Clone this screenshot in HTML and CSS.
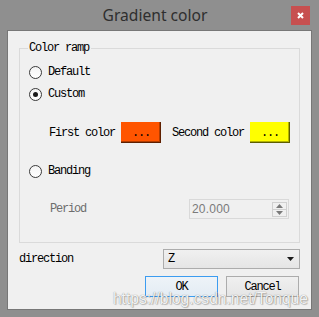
FILE: index.html
```html
<!DOCTYPE html>
<html>
<head>
<meta charset="utf-8">
<link rel="stylesheet" href="styles.css">
</head>
<body>
<div class="window">
  <div class="titlebar">
    <span class="spacer"></span>
    <div class="title">Gradient color</div>
    <div class="close">
      <svg width="19" height="19" viewBox="0 0 19 19"><path d="M7 7 L12 12 M12 7 L7 12" stroke="#fff" stroke-width="2" fill="none"/></svg>
    </div>
  </div>
  <div class="content">
    <div class="group">
      <span class="legend">Color ramp</span>
      <div class="row radio-row first"><span class="radio"></span><span class="lbl">Default</span></div>
      <div class="row radio-row gap6"><span class="radio checked"></span><span class="lbl">Custom</span></div>
      <div class="row colors">
        <span class="clabel w66">First color</span>
        <span class="swatch orange">...</span>
        <span class="clabel w72">Second color</span>
        <span class="swatch yellow">...</span>
      </div>
      <div class="row radio-row gap20"><span class="radio"></span><span class="lbl">Banding</span></div>
      <div class="row period">
        <span class="plabel">Period</span>
        <div class="spin">
          <span class="spinval">20.000</span>
          <div class="spinbtns">
            <div class="sb up"><svg width="7" height="4" viewBox="0 0 7 4"><polygon points="3.5,0 7,4 0,4" fill="#7a7a7a"/></svg></div>
            <div class="sb down"><svg width="7" height="4" viewBox="0 0 7 4"><polygon points="0,0 7,0 3.5,4" fill="#7a7a7a"/></svg></div>
          </div>
        </div>
      </div>
    </div>
    <div class="dir-row">
      <span class="lbl">direction</span>
      <div class="combo">
        <span class="lbl">Z</span>
        <svg class="arrow" width="7" height="4" viewBox="0 0 7 4"><polygon points="0,0 7,0 3.5,4" fill="#1a1a1a"/></svg>
      </div>
    </div>
    <div class="btn-row">
      <div class="btn ok">OK</div>
      <div class="btn">Cancel</div>
    </div>
    <div class="watermark">https://blog.csdn.net/Tonque</div>
  </div>
</div>
</body>
</html>
```

FILE: styles.css
```css
* { box-sizing: border-box; }
html, body { margin: 0; padding: 0; }
body { width: 319px; height: 317px; overflow: hidden; background: #8f8f8f; }

.window {
  width: 319px;
  height: 317px;
  background: #8f8f8f;
  display: flex;
  flex-direction: column;
}

.titlebar {
  height: 30px;
  display: grid;
  grid-template-columns: 1fr auto 1fr;
  padding-right: 9px;
}
.title {
  font-family: "Noto Sans", sans-serif;
  font-size: 15.6px;
  line-height: 30px;
  color: #2e2e2e;
  white-space: nowrap;
}
.close {
  justify-self: end;
  margin-top: 6px;
  width: 19px;
  height: 19px;
  background: #c75050;
}
.close svg { display: block; }

.content {
  position: relative;
  margin: 0 7px;
  height: 280px;
  border: 1px solid #777;
  background: #f0f0f0;
  padding: 17px 11px 0 11px;
  font-family: "Liberation Mono", monospace;
  font-size: 12px;
  letter-spacing: -1.2px;
  color: #000;
}

.group {
  position: relative;
  border: 1px solid #dadada;
  padding: 15px 0 23px 9px;
  display: flex;
  flex-direction: column;
}
.legend {
  position: absolute;
  top: -9px;
  left: 8px;
  padding: 0 2px 0 1px;
  line-height: 16px;
  background: #f0f0f0;
}

.row { display: flex; align-items: center; }
.radio-row { height: 16px; }
.gap6 { margin-top: 6px; }
.gap20 { margin-top: 20px; }

.radio {
  width: 13px;
  height: 13px;
  border-radius: 50%;
  border: 1px solid #3a3a3a;
  background: linear-gradient(#f4f4f4, #ffffff);
  display: flex;
  align-items: center;
  justify-content: center;
  margin-right: 6px;
}
.radio.checked::after {
  content: "";
  width: 5px;
  height: 5px;
  border-radius: 50%;
  background: #1a1a1a;
}
.lbl { line-height: 16px; }

.colors { margin-top: 20px; height: 21px; padding-left: 20px; }
.clabel { display: inline-block; line-height: 16px; white-space: nowrap; }
.w66 { width: 66px; margin-right: 6px; }
.w72 { width: 72px; margin-left: 11px; margin-right: 6px; }
.swatch {
  width: 40px;
  height: 21px;
  display: flex;
  align-items: center;
  justify-content: center;
  line-height: 16px;
}
.orange {
  background: #ff5500;
  box-shadow: inset -1px -1px 0 #5e1f00, inset -2px -2px 0 #b33c00;
}
.yellow {
  background: #ffff00;
  box-shadow: inset -1px -1px 0 #5e5e00, inset -2px -2px 0 #b3b300;
}

.period { margin-top: 20px; height: 20px; padding-left: 21px; padding-right: 10px; }
.plabel { color: #6d6d6d; line-height: 16px; }
.spin {
  margin-left: auto;
  width: 100px;
  height: 20px;
  border: 1px solid #d9d9d9;
  display: flex;
  align-items: center;
  padding-left: 2px;
}
.spinval {
  font-family: "Liberation Sans", sans-serif;
  font-size: 12px;
  letter-spacing: 0.2px;
  color: #7a7a7a;
}
.spinbtns {
  margin-left: auto;
  margin-right: 1px;
  width: 15px;
  height: 15px;
  border: 1px solid #d0d0d0;
  display: flex;
  flex-direction: column;
}
.sb { flex: 1; display: flex; align-items: center; justify-content: center; }
.sb.up { border-bottom: 1px solid #d0d0d0; }
.sb svg { display: block; }

.dir-row { margin-top: 6px; height: 20px; display: flex; align-items: center; }
.combo {
  margin-left: auto;
  width: 137px;
  height: 20px;
  border: 1px solid #acacac;
  background: linear-gradient(#f0f0f0, #e5e5e5);
  display: flex;
  align-items: center;
  padding-left: 4px;
  padding-right: 5px;
}
.combo .arrow { margin-left: auto; display: block; }

.btn-row { margin-top: 7px; height: 21px; display: flex; justify-content: flex-end; gap: 8px; padding-right: 1px; }
.btn {
  width: 73px;
  height: 21px;
  border: 1px solid #acacac;
  background: linear-gradient(#f0f0f0, #e5e5e5);
  display: flex;
  align-items: center;
  justify-content: center;
  line-height: 16px;
}
.btn.ok { border-color: #3c9cf0; background: linear-gradient(#eef3f8, #e3ecf4); }

.watermark {
  position: absolute;
  right: 3px;
  bottom: 1px;
  font-family: "Liberation Sans", sans-serif;
  font-size: 15.6px;
  letter-spacing: 0;
  line-height: 18px;
  color: rgba(255, 255, 255, 0.92);
  text-shadow: 0 0 1px rgba(0, 0, 0, 0.5), 1px 1px 1px rgba(0, 0, 0, 0.2);
  white-space: nowrap;
}
```
